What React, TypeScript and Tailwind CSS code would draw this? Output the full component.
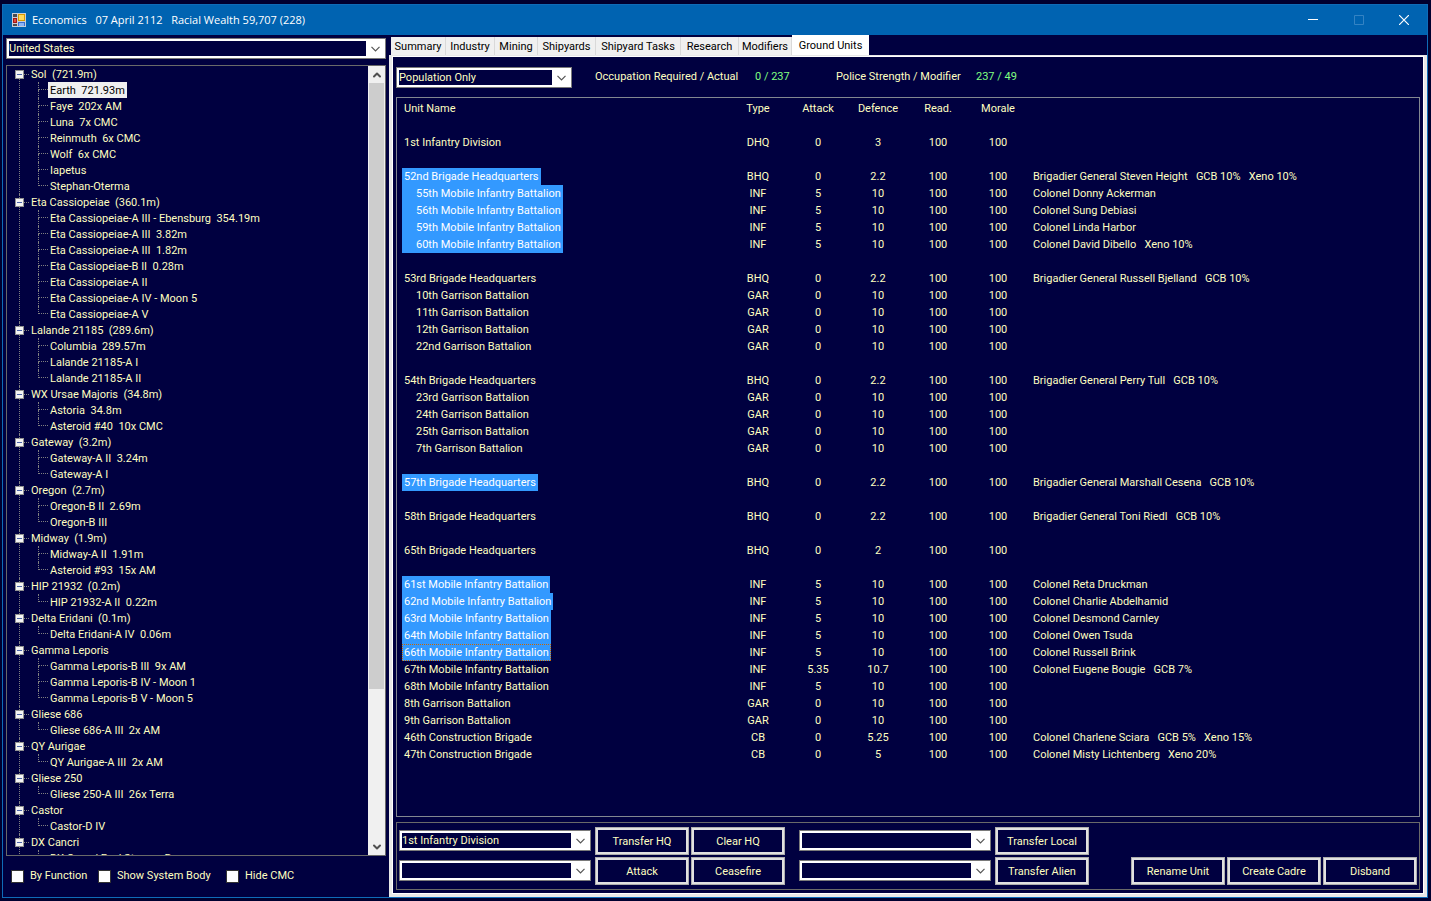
import { ChevronDown, ChevronUp } from "lucide-react";

type System = { name: string; bodies: string[] };
type Unit = {
    name: string;
    stats: string[];
    commander?: string;
    indent?: boolean;
    selected?: boolean;
    focused?: boolean;
};

const systems: System[] = [
    { name: "Sol  (721.9m)", bodies: ["Earth  721.93m", "Faye  202x AM", "Luna  7x CMC", "Reinmuth  6x CMC", "Wolf  6x CMC", "Iapetus", "Stephan-Oterma"] },
    {
        name: "Eta Cassiopeiae  (360.1m)",
        bodies: ["Eta Cassiopeiae-A III - Ebensburg  354.19m", "Eta Cassiopeiae-A III  3.82m", "Eta Cassiopeiae-A III  1.82m", "Eta Cassiopeiae-B II  0.28m", "Eta Cassiopeiae-A II", "Eta Cassiopeiae-A IV - Moon 5", "Eta Cassiopeiae-A V"],
    },
    { name: "Lalande 21185  (289.6m)", bodies: ["Columbia  289.57m", "Lalande 21185-A I", "Lalande 21185-A II"] },
    { name: "WX Ursae Majoris  (34.8m)", bodies: ["Astoria  34.8m", "Asteroid #40  10x CMC"] },
    { name: "Gateway  (3.2m)", bodies: ["Gateway-A II  3.24m", "Gateway-A I"] },
    { name: "Oregon  (2.7m)", bodies: ["Oregon-B II  2.69m", "Oregon-B III"] },
    { name: "Midway  (1.9m)", bodies: ["Midway-A II  1.91m", "Asteroid #93  15x AM"] },
    { name: "HIP 21932  (0.2m)", bodies: ["HIP 21932-A II  0.22m"] },
    { name: "Delta Eridani  (0.1m)", bodies: ["Delta Eridani-A IV  0.06m"] },
    { name: "Gamma Leporis", bodies: ["Gamma Leporis-B III  9x AM", "Gamma Leporis-B IV - Moon 1", "Gamma Leporis-B V - Moon 5"] },
    { name: "Gliese 686", bodies: ["Gliese 686-A III  2x AM"] },
    { name: "QY Aurigae", bodies: ["QY Aurigae-A III  2x AM"] },
    { name: "Gliese 250", bodies: ["Gliese 250-A III  26x Terra"] },
    { name: "Castor", bodies: ["Castor-D IV"] },
    { name: "DX Cancri", bodies: ["DX Cancri Fuel Storage B"] },
];

const inf = ["INF", "5", "10", "100", "100"];
const gar = ["GAR", "0", "10", "100", "100"];
const bhq = ["BHQ", "0", "2.2", "100", "100"];

// null is an empty line between formations
const units: (Unit | null)[] = [
    null,
    { name: "1st Infantry Division", stats: ["DHQ", "0", "3", "100", "100"] },
    null,
    { name: "52nd Brigade Headquarters", stats: bhq, commander: "Brigadier General Steven Height   GCB 10%   Xeno 10%", selected: true },
    { name: "55th Mobile Infantry Battalion", stats: inf, commander: "Colonel Donny Ackerman", indent: true, selected: true },
    { name: "56th Mobile Infantry Battalion", stats: inf, commander: "Colonel Sung Debiasi", indent: true, selected: true },
    { name: "59th Mobile Infantry Battalion", stats: inf, commander: "Colonel Linda Harbor", indent: true, selected: true },
    { name: "60th Mobile Infantry Battalion", stats: inf, commander: "Colonel David Dibello   Xeno 10%", indent: true, selected: true },
    null,
    { name: "53rd Brigade Headquarters", stats: bhq, commander: "Brigadier General Russell Bjelland   GCB 10%" },
    { name: "10th Garrison Battalion", stats: gar, indent: true },
    { name: "11th Garrison Battalion", stats: gar, indent: true },
    { name: "12th Garrison Battalion", stats: gar, indent: true },
    { name: "22nd Garrison Battalion", stats: gar, indent: true },
    null,
    { name: "54th Brigade Headquarters", stats: bhq, commander: "Brigadier General Perry Tull   GCB 10%" },
    { name: "23rd Garrison Battalion", stats: gar, indent: true },
    { name: "24th Garrison Battalion", stats: gar, indent: true },
    { name: "25th Garrison Battalion", stats: gar, indent: true },
    { name: "7th Garrison Battalion", stats: gar, indent: true },
    null,
    { name: "57th Brigade Headquarters", stats: bhq, commander: "Brigadier General Marshall Cesena   GCB 10%", selected: true },
    null,
    { name: "58th Brigade Headquarters", stats: bhq, commander: "Brigadier General Toni Riedl   GCB 10%" },
    null,
    { name: "65th Brigade Headquarters", stats: ["BHQ", "0", "2", "100", "100"] },
    null,
    { name: "61st Mobile Infantry Battalion", stats: inf, commander: "Colonel Reta Druckman", selected: true },
    { name: "62nd Mobile Infantry Battalion", stats: inf, commander: "Colonel Charlie Abdelhamid", selected: true },
    { name: "63rd Mobile Infantry Battalion", stats: inf, commander: "Colonel Desmond Carnley", selected: true },
    { name: "64th Mobile Infantry Battalion", stats: inf, commander: "Colonel Owen Tsuda", selected: true },
    { name: "66th Mobile Infantry Battalion", stats: inf, commander: "Colonel Russell Brink", selected: true, focused: true },
    { name: "67th Mobile Infantry Battalion", stats: ["INF", "5.35", "10.7", "100", "100"], commander: "Colonel Eugene Bougie   GCB 7%" },
    { name: "68th Mobile Infantry Battalion", stats: inf },
    { name: "8th Garrison Battalion", stats: gar },
    { name: "9th Garrison Battalion", stats: gar },
    { name: "46th Construction Brigade", stats: ["CB", "0", "5.25", "100", "100"], commander: "Colonel Charlene Sciara   GCB 5%   Xeno 15%" },
    { name: "47th Construction Brigade", stats: ["CB", "0", "5", "100", "100"], commander: "Colonel Misty Lichtenberg   Xeno 20%" },
];

const tabs = [
    { name: "Summary", width: "w-[55px]" },
    { name: "Industry", width: "w-[49px]" },
    { name: "Mining", width: "w-[43px]" },
    { name: "Shipyards", width: "w-[58px]" },
    { name: "Shipyard Tasks", width: "w-[85px]" },
    { name: "Research", width: "w-[58px]" },
    { name: "Modifiers", width: "w-[53px]" },
];

const Combo = ({ label, value, className }: { label: string; value: string; className: string }) => (
    <div className={`flex h-[21px] shrink-0 border border-[#7a7a7a] bg-white p-[2px] ${className}`}>
        <select aria-label={label} className="min-w-0 flex-1 appearance-none bg-[#000040] leading-[15px] outline-none">
            <option>{value}</option>
        </select>
        <span className="flex w-[17px] items-center justify-center pl-[2px]">
            <svg width="9" height="6" viewBox="0 0 9 6" fill="none" stroke="#555" strokeWidth="1.2">
                <path d="M0.5 0.8 L4.5 4.8 L8.5 0.8" />
            </svg>
        </span>
    </div>
);

const PushButton = ({ children }: { children: string }) => (
    <button className="h-7 w-[94px] border border-[#adadad] bg-[#000040] pt-[2px] text-center whitespace-nowrap inset-ring-2 inset-ring-[#e1e1e1]">
        {children}
    </button>
);

const Check = ({ label, className }: { label: string; className: string }) => (
    <label className={`flex items-center gap-[6px] whitespace-nowrap ${className}`}>
        <input type="checkbox" className="size-[13px] appearance-none border border-[#333] bg-white" />
        {label}
    </label>
);

const TitleBar = () => (
    <header className="flex h-[30px] shrink-0 items-center bg-[#0063b1] pl-[9px] font-['Open_Sans',sans-serif] text-white">
        <svg width="14" height="14" viewBox="0 0 14 14">
            <path d="M0 0h14v14H0z" fill="#c9ced6" />
            <path d="M1 1h4v3H1zM1 11h4v2H1z" fill="#4b4b50" />
            <path d="M1 5h4v5H1z" fill="#a31515" />
            <path d="M2 6h2v3H2z" fill="#e04a3a" />
            <path d="M6 1h7v7H6z" fill="#d99a00" />
            <path d="M7 2h5v5H7z" fill="#ffd95a" />
            <path d="M6 9h7v4H6z" fill="#3c6fd0" />
            <path d="M7 10h5v3H7z" fill="#8db4f5" />
        </svg>
        <h1 className="ml-[6px] flex-1 whitespace-pre">Economics   07 April 2112   Racial Wealth 59,707 (228)</h1>
        <button aria-label="Minimize" className="flex h-full w-[46px] items-center justify-center">
            <svg width="10" height="10"><path d="M0 4.5h10" stroke="#fff" /></svg>
        </button>
        <button aria-label="Maximize" disabled className="flex h-full w-[45px] items-center justify-center">
            <svg width="10" height="10"><path d="M.5 .5h9v9h-9z" fill="none" stroke="#3483c3" /></svg>
        </button>
        <button aria-label="Close" className="flex h-full w-[46px] items-center justify-center">
            <svg width="10" height="10"><path d="M0 0L10 10M10 0L0 10" stroke="#fff" strokeWidth="1.2" /></svg>
        </button>
    </header>
);

const SystemNode = ({ system, first }: { system: System; first: boolean }) => (
    <li className="flex">
        <div className="flex w-[9px] flex-col items-center">
            <span className={`h-1 shrink-0 border-l border-dotted ${first ? "border-transparent" : "border-[#808080]"}`} />
            <button aria-label={`Collapse ${system.name}`} className="flex size-[9px] shrink-0 items-center justify-center border border-[#919191] bg-[#f4f4f4]">
                <span className="h-px w-[5px] bg-[#4b63a7]" />
            </button>
            <span className="flex-1 border-l border-dotted border-[#808080]" />
        </div>
        <div>
            <div className="flex h-4">
                <span className="w-[5px] self-center border-t border-dotted border-[#808080]" />
                <span className="pl-[2px]">{system.name}</span>
            </div>
            <ul className="pl-[14px]">
                {system.bodies.map((body, i) => (
                    <li key={i} className="flex h-4">
                        <span className="flex w-[10px] flex-col">
                            <span className="h-2 border-b border-l border-dotted border-[#808080]" />
                            {i < system.bodies.length - 1 && <span className="h-2 border-l border-dotted border-[#808080]" />}
                        </span>
                        <span className={`px-[2px] ${body.startsWith("Earth") ? "bg-[#f0f0f0] text-black" : ""}`}>{body}</span>
                    </li>
                ))}
            </ul>
        </div>
    </li>
);

const SidePanel = () => (
    <aside className="flex w-[380px] shrink-0 flex-col pt-[3px]">
        <Combo label="Race" value="United States" className="" />
        <div className="mt-[6px] flex min-h-0 flex-1 border border-[#696969]">
            <ul className="flex-1 overflow-hidden pl-2 leading-[18px] whitespace-pre">
                {systems.map((s, i) => <SystemNode key={s.name} system={s} first={i === 0} />)}
            </ul>
            <div className="flex w-[17px] flex-col bg-[#f0f0f0] text-[#505050]">
                <button aria-label="Scroll up" className="flex h-[17px] items-center justify-center"><ChevronUp size={12} strokeWidth={4} /></button>
                <div className="mx-px h-[606px] bg-[#cdcdcd]" />
                <span className="flex-1" />
                <button aria-label="Scroll down" className="flex h-[17px] items-center justify-center"><ChevronDown size={12} strokeWidth={4} /></button>
            </div>
        </div>
        <div className="flex h-[41px] items-center pl-[5px]">
            <Check label="By Function" className="w-[87px]" />
            <Check label="Show System Body" className="w-[128px]" />
            <Check label="Hide CMC" className="" />
        </div>
    </aside>
);

const UnitName = ({ unit }: { unit: Unit }) => {
    if (unit.focused) {
        return <span className="block w-fit border border-dotted border-[#cc6600] bg-[#3399ff] px-px leading-[15px] text-white">{unit.name}</span>;
    }
    return (
        <span className={`block w-fit pr-[2px] ${unit.indent ? "pl-[14px]" : "pl-[2px]"} ${unit.selected ? "bg-[#3399ff] text-white" : ""}`}>
            {unit.name}
        </span>
    );
};

const UnitTable = () => (
    <div className="mt-[9px] min-h-0 flex-1 overflow-hidden border border-[#828790] pt-[2px] pl-[5px]">
        <table className="w-full table-fixed border-collapse whitespace-pre">
            <thead>
                <tr className="h-[17px] leading-[17px]">
                    <th className="w-[326px] p-0 pl-[2px] text-left font-normal">Unit Name</th>
                    {["Type", "Attack", "Defence", "Read.", "Morale"].map((h) => (
                        <th key={h} className="w-[60px] p-0 font-normal">{h}</th>
                    ))}
                    <th className="p-0" aria-label="Commander" />
                </tr>
            </thead>
            <tbody>
                {units.map((u, i) =>
                    u ? (
                        <tr key={i} className="h-[17px] leading-[17px]">
                            <td className="p-0"><UnitName unit={u} /></td>
                            {u.stats.map((s, j) => <td key={j} className="p-0 text-center">{s}</td>)}
                            <td className="p-0 pl-[5px]">{u.commander}</td>
                        </tr>
                    ) : (
                        <tr key={i} className="h-[17px]"><td colSpan={7} className="p-0" /></tr>
                    )
                )}
            </tbody>
        </table>
    </div>
);

const Actions = () => (
    <footer className="mt-[5px] flex shrink-0 items-end justify-between border border-[#696969] px-[2px] py-1">
        <div className="grid grid-cols-[auto_auto_auto_auto_auto] items-start gap-[2px]">
            <Combo label="Headquarters" value="1st Infantry Division" className="mt-[3px] mr-[2px] w-[192px]" />
            <PushButton>Transfer HQ</PushButton>
            <PushButton>Clear HQ</PushButton>
            <Combo label="Local population" value="" className="mt-[3px] mr-[2px] ml-3 w-[192px]" />
            <PushButton>Transfer Local</PushButton>
            <Combo label="Attack target" value="" className="mt-[3px] mr-[2px] w-[192px]" />
            <PushButton>Attack</PushButton>
            <PushButton>Ceasefire</PushButton>
            <Combo label="Alien race" value="" className="mt-[3px] mr-[2px] ml-3 w-[192px]" />
            <PushButton>Transfer Alien</PushButton>
        </div>
        <div className="flex gap-[2px]">
            <PushButton>Rename Unit</PushButton>
            <PushButton>Create Cadre</PushButton>
            <PushButton>Disband</PushButton>
        </div>
    </footer>
);

export default function App() {
    return (
        <div className="flex h-screen flex-col bg-[#000030] pt-1 pr-[3px] pb-[3px] pl-[2px] font-[Roboto,'Liberation_Sans',sans-serif] text-[11px] text-[#ffffc0]">
            <div className="flex min-h-0 flex-1 flex-col border border-[#0f6cb8] bg-[#000040]">
                <TitleBar />
                <div className="flex min-h-0 flex-1 gap-[3px] pl-[3px]">
                    <SidePanel />
                    <main className="flex min-w-0 flex-1 flex-col">
                        <nav className="flex h-5 items-end pl-[2px] leading-4 text-black">
                            {tabs.map((t) => (
                                <button key={t.name} className={`h-[18px] border-r border-[#d9d9d9] bg-[#f0f0f0] pt-[2px] text-center whitespace-nowrap ${t.width}`}>{t.name}</button>
                            ))}
                            <button className="h-5 w-[77px] bg-white pt-[2px] text-center whitespace-nowrap">Ground Units</button>
                        </nav>
                        <div className="flex min-h-0 flex-1 flex-col border-3 border-t border-[#e8e8e8] px-1 pt-[11px] pb-1 inset-ring-1 inset-ring-white">
                            <div className="flex items-center">
                                <Combo label="Population filter" value="Population Only" className="w-[176px]" />
                                <span className="ml-[23px] w-[160px]">Occupation Required / Actual</span>
                                <span className="w-[81px] text-[#80ff80]">0 / 237</span>
                                <span className="w-[140px]">Police Strength / Modifier</span>
                                <span className="text-[#80ff80]">237 / 49</span>
                            </div>
                            <UnitTable />
                            <Actions />
                        </div>
                    </main>
                </div>
            </div>
        </div>
    );
}
